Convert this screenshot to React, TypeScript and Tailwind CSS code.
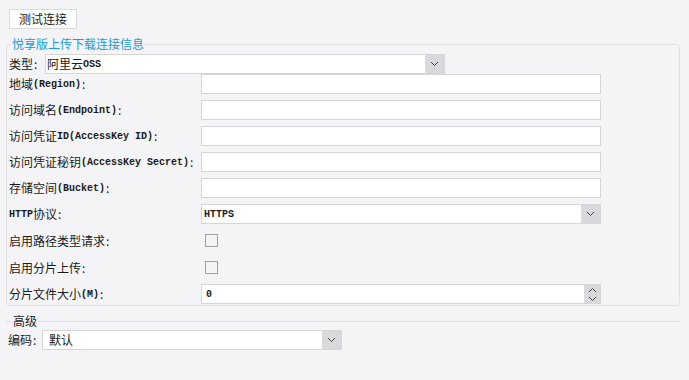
import React from 'react';

const cjk = "font-['Noto_Sans_CJK_SC','Noto_Sans',sans-serif]";
const mono = "font-['Liberation_Mono','Noto_Sans_CJK_SC',monospace] text-[10px] font-bold";

const Chevron: React.FC<{ up?: boolean }> = ({ up = false }) => (
  <svg width="9" height="6" viewBox="0 0 9 6" className="block">
    <path
      d={up ? 'M1 5 L4.5 1.5 L8 5' : 'M1 1 L4.5 4.5 L8 1'}
      fill="none"
      stroke="#444"
      strokeWidth="1"
    />
  </svg>
);

const Label: React.FC<{ zh: string; en?: string; width?: string }> = ({ zh, en, width = 'w-[192px]' }) => (
  <div className={`${width} shrink-0 flex items-center text-[12px] text-[#1b1b1b] whitespace-nowrap`}>
    <span>{zh}</span>
    {en && <span className={mono}>{en}</span>}
    <span className="ml-[1px]">:</span>
  </div>
);

const TextBox: React.FC = () => <div className="w-[400px] h-[20px] bg-white border border-[#d6d6d9]" />;

const SelectBox: React.FC<{ width: string; pad: string; children: React.ReactNode }> = ({ width, pad, children }) => (
  <div className={`${width} h-[20px] bg-white border border-[#d6d6d9] flex items-stretch`}>
    <div className={`flex-1 flex items-center ${pad} text-[12px] text-[#1b1b1b]`}>{children}</div>
    <div className="w-[19px] bg-[#d9d9dd] flex items-center justify-center">
      <Chevron />
    </div>
  </div>
);

const CheckBox: React.FC = () => (
  <div className="ml-[4px] w-[13px] h-[13px] border border-[#a0a0a4] bg-[#f4f4f6]" />
);

const Row: React.FC<{ children: React.ReactNode; h?: string }> = ({ children, h = 'h-[20px]' }) => (
  <div className={`flex items-center ${h}`}>{children}</div>
);

export default function App() {
  return (
    <div className={`w-[689px] h-[380px] bg-[#f4f4f6] ${cjk} text-[12px] overflow-hidden`}>
      <div className="pt-[9px] pl-[9px]">
        <button className="w-[68px] h-[20px] bg-white border border-[#dadadd] text-[12px] text-[#1b1b1b] leading-none">
          测试连接
        </button>
      </div>

      <fieldset className="mt-[8px] ml-[6px] w-[674px] border border-[#e0e0e3] rounded-[4px] pl-[2px] pb-[1px]">
        <legend className="ml-[2px] px-[1px] text-[12px] leading-[14px] text-[#1a9ad6]">
          悦享版上传下载连接信息
        </legend>
        <div className="pt-[3px]">
          <Row>
            <Label zh="类型" width="w-[36px]" />
            <SelectBox width="w-[400px]" pad="pl-[1px]">
              <span>阿里云</span>
              <span className={mono}>OSS</span>
            </SelectBox>
          </Row>
          <div className="flex flex-col gap-[6px]">
            <Row>
              <Label zh="地域" en="(Region)" />
              <TextBox />
            </Row>
            <Row>
              <Label zh="访问域名" en="(Endpoint)" />
              <TextBox />
            </Row>
            <Row>
              <Label zh="访问凭证" en="ID(AccessKey ID)" />
              <TextBox />
            </Row>
            <Row>
              <Label zh="访问凭证秘钥" en="(AccessKey Secret)" />
              <TextBox />
            </Row>
            <Row>
              <Label zh="存储空间" en="(Bucket)" />
              <TextBox />
            </Row>
            <Row>
              <div className="w-[192px] shrink-0 flex items-center text-[12px] text-[#1b1b1b]">
                <span className={mono}>HTTP</span>
                <span>协议</span>
                <span className="ml-[1px]">:</span>
              </div>
              <SelectBox width="w-[400px]" pad="pl-[2px]">
                <span className={mono}>HTTPS</span>
              </SelectBox>
            </Row>
            <Row h="h-[21px]">
              <Label zh="启用路径类型请求" />
              <CheckBox />
            </Row>
            <Row h="h-[21px]">
              <Label zh="启用分片上传" />
              <CheckBox />
            </Row>
            <Row>
              <Label zh="分片文件大小" en="(M)" />
              <div className="w-[400px] h-[20px] bg-white border border-[#d6d6d9] flex items-stretch">
                <div className="flex-1 flex items-center pl-[4px]">
                  <span className={`${mono} text-[#1b1b1b]`}>0</span>
                </div>
                <div className="w-[16px] bg-[#d9d9dd] flex flex-col items-center justify-center gap-[3px]">
                  <Chevron up />
                  <Chevron />
                </div>
              </div>
            </Row>
          </div>
        </div>
      </fieldset>

      <fieldset className="mt-[8px] ml-[6px] w-[674px] border-t border-[#e0e0e3] pl-[2px]">
        <legend className="ml-[4px] px-[1px] text-[12px] leading-[14px] text-[#1b1b1b]">高级</legend>
        <div className="pt-[2px]">
          <Row>
            <Label zh="编码" width="w-[34px]" />
            <SelectBox width="w-[300px]" pad="pl-[6px]">
              <span>默认</span>
            </SelectBox>
          </Row>
        </div>
      </fieldset>
    </div>
  );
}
